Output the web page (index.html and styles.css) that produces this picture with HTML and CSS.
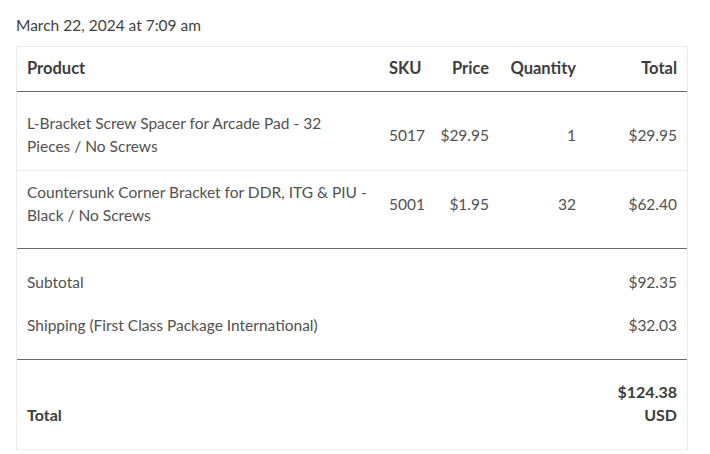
FILE: index.html
```html
<!DOCTYPE html>
<html lang="en">
<head>
<meta charset="utf-8">
<title>Order details</title>
<link rel="stylesheet" href="styles.css">
</head>
<body>
<div class="page">
  <p class="date">March 22, 2024 at 7:09 am</p>
  <table class="order">
    <colgroup>
      <col class="c-product">
      <col class="c-sku">
      <col class="c-price">
      <col class="c-qty">
      <col class="c-total">
    </colgroup>
    <thead>
      <tr>
        <th class="head">Product</th>
        <th class="head num">SKU</th>
        <th class="head num">Price</th>
        <th class="head num">Quantity</th>
        <th class="head num">Total</th>
      </tr>
    </thead>
    <tbody>
      <tr class="item item-first">
        <td class="name">L-Bracket Screw Spacer for Arcade Pad - 32 Pieces&nbsp;/ No Screws</td>
        <td class="num">5017</td>
        <td class="num">$29.95</td>
        <td class="num">1</td>
        <td class="num">$29.95</td>
      </tr>
      <tr class="item item-last">
        <td class="name">Countersunk Corner Bracket for DDR, ITG &amp; PIU - Black / No Screws</td>
        <td class="num">5001</td>
        <td class="num">$1.95</td>
        <td class="num">32</td>
        <td class="num">$62.40</td>
      </tr>
    </tbody>
    <tfoot>
      <tr class="sum sum-first">
        <td colspan="4">Subtotal</td>
        <td class="num">$92.35</td>
      </tr>
      <tr class="sum sum-last">
        <td colspan="4">Shipping (First Class Package International)</td>
        <td class="num">$32.03</td>
      </tr>
      <tr class="grand">
        <th colspan="4" class="grand-label">Total</th>
        <td class="num grand-value">$124.38 USD</td>
      </tr>
    </tfoot>
  </table>
</div>
</body>
</html>
```
FILE: styles.css
```css
html, body {
  margin: 0;
  padding: 0;
  background: #ffffff;
}

body {
  font-family: Lato, "Open Sans", sans-serif;
  font-size: 15.5px;
  line-height: 23px;
  color: #515151;
}

.page {
  padding: 14px 16px 0 16px;
}

.date {
  margin: 0 0 9px 0;
  color: #3f3f3f;
}

.order {
  width: 672px;
  table-layout: fixed;
  border-collapse: separate;
  border-spacing: 0;
  border: 1px solid #ebebeb;
}

.c-product { width: 362px; }
.c-sku { width: 51px; }
.c-price { width: 69px; }
.c-qty { width: 87px; }
.c-total { width: 101px; }

.order th,
.order td {
  padding: 0 10px;
  text-align: left;
  vertical-align: middle;
}

.order .num {
  text-align: right;
}

.head {
  font-weight: 700;
  font-size: 16.5px;
  color: #3d3d3d;
  padding-top: 10px !important;
  padding-bottom: 11px !important;
  border-bottom: 1px solid #6a6a6a;
}

.item-first td {
  padding-top: 20px;
  padding-bottom: 12px;
  border-bottom: 1px solid #ededed;
}

.item-last td {
  padding-top: 10px;
  padding-bottom: 21px;
  border-bottom: 1px solid #6a6a6a;
}

.sum-first td {
  padding-top: 22px;
  padding-bottom: 8px;
}

.sum-last td {
  padding-top: 12px;
  padding-bottom: 22px;
  border-bottom: 1px solid #6a6a6a;
}

.grand th,
.grand td {
  padding-top: 20px;
  padding-bottom: 23px;
  font-weight: 700;
  font-size: 16px;
  color: #3d3d3d;
}

.grand-label {
  vertical-align: bottom !important;
}
```
